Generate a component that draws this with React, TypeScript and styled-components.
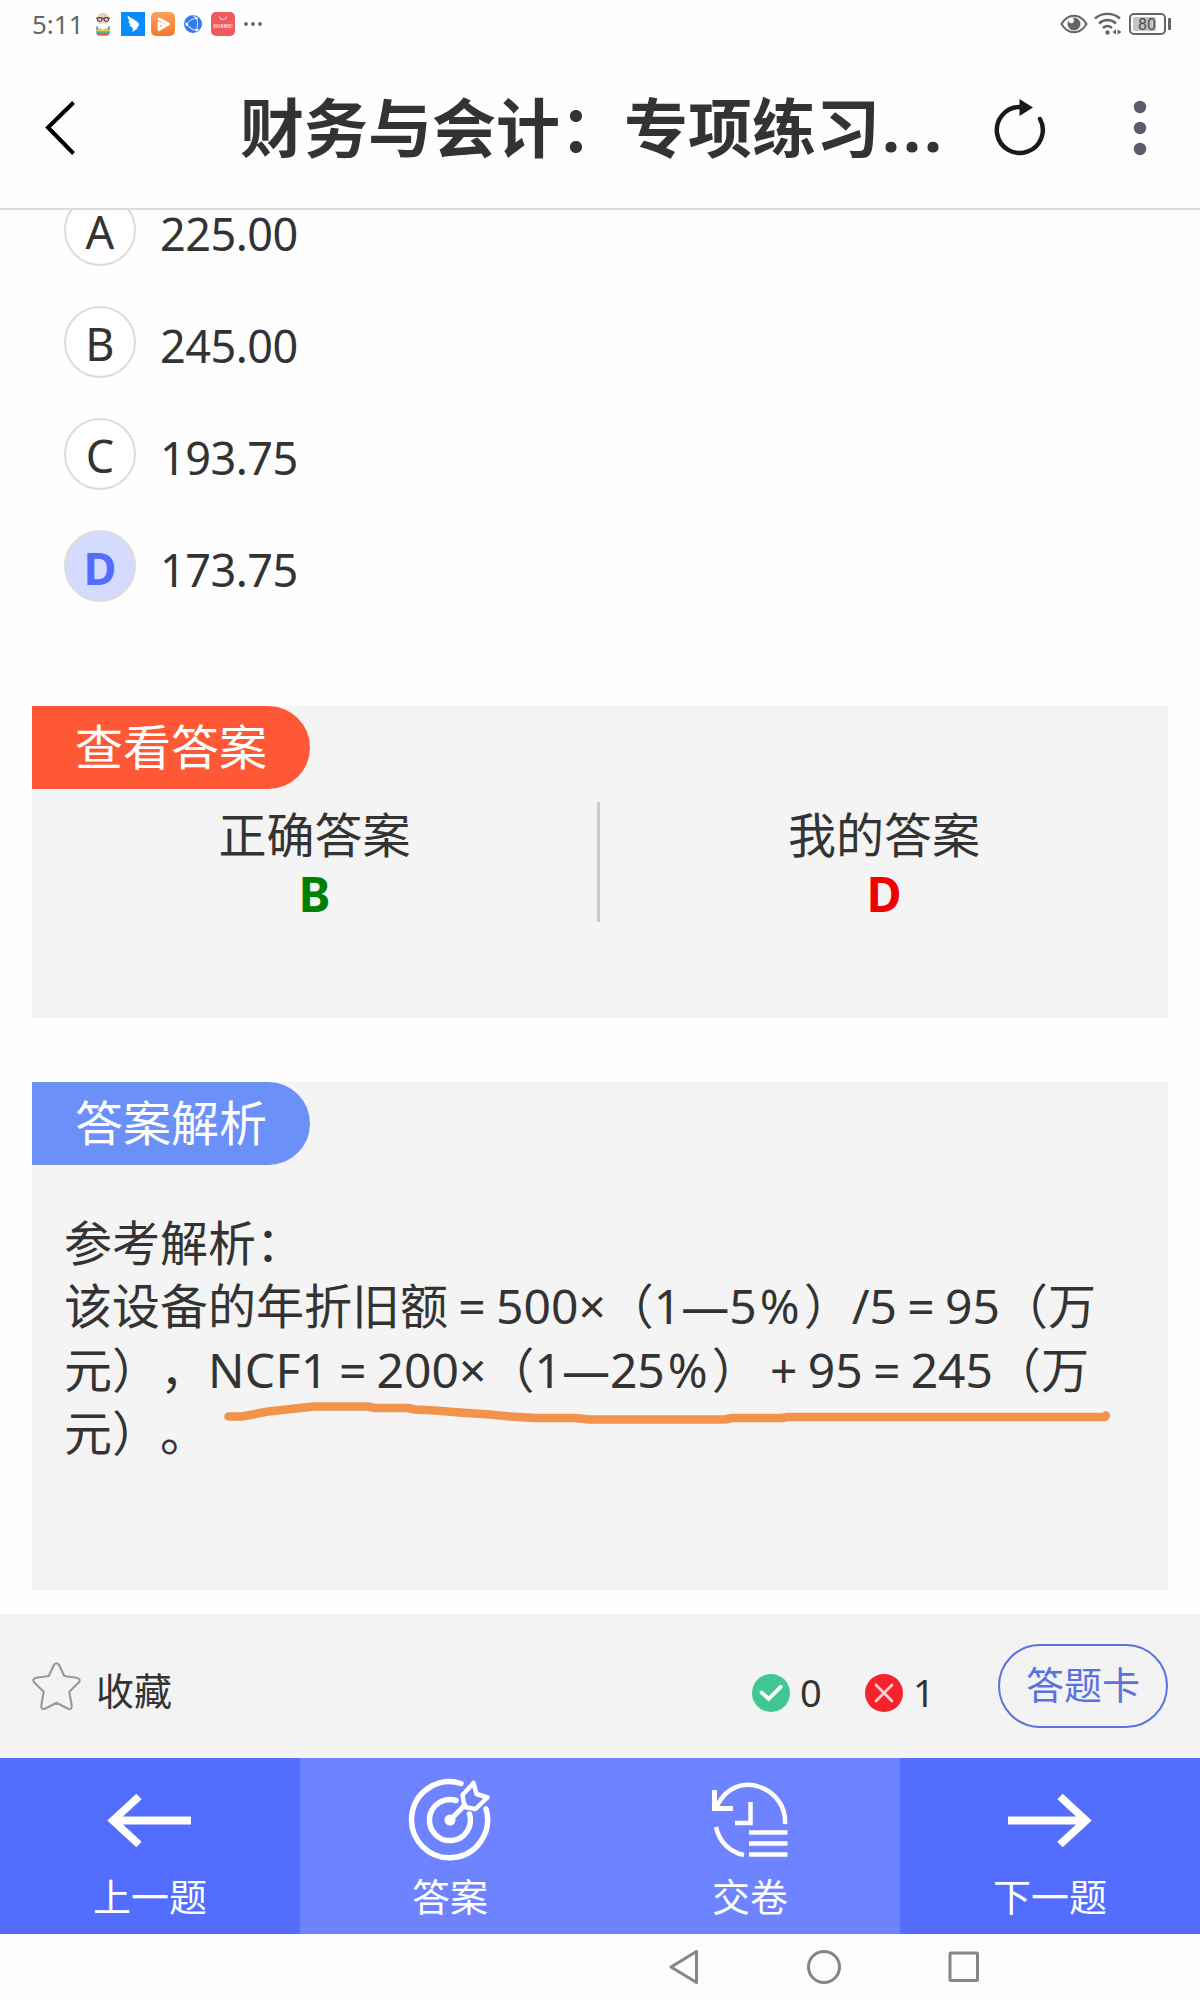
import React from "react";
import styled, { createGlobalStyle } from "styled-components";

const Global = createGlobalStyle`
  * { box-sizing: border-box; }
  html, body { margin: 0; padding: 0; background: #fefefe; }
  body {
    font-family: "Noto Sans", "Noto Sans CJK SC", sans-serif;
    color: #333;
    text-spacing-trim: space-all;
  }
  svg { display: block; flex: none; }
`;

const Screen = styled.div`
  width: 1200px;
  height: 2000px;
  display: flex;
  flex-direction: column;
  overflow: hidden;
  background: #fefefe;
`;

const StatusBar = styled.div`
  height: 48px;
  flex: none;
  display: flex;
  align-items: center;
  justify-content: space-between;
  padding: 0 29px 0 32px;
`;

const StatusGroup = styled.div<{ $gap: number }>`
  display: flex;
  align-items: center;
  gap: ${(p) => p.$gap}px;
`;

const AppIcons = styled.div`
  display: flex;
  align-items: center;
  gap: 9px;
`;

const Clock = styled.span`
  font-size: 26px;
  line-height: 26px;
  color: #666;
  width: 57px;
`;

const Battery = styled.div`
  display: flex;
  align-items: center;
  gap: 2px;
  margin-left: 1px;
`;

const BatteryBody = styled.div`
  width: 37px;
  height: 22px;
  border: 2px solid #666;
  border-radius: 5px;
  padding: 2px;
`;

const BatteryFill = styled.div`
  width: 23px;
  height: 14px;
  border-radius: 2px;
  background: #c4c4c4;
  color: #4c4c4c;
  font: 16px/15px Roboto, sans-serif;
  padding-left: 5px;
`;

const BatteryNub = styled.div`
  width: 3px;
  height: 12px;
  border-radius: 1px;
  background: #666;
`;

const Header = styled.header`
  height: 162px;
  flex: none;
  display: flex;
  align-items: center;
  border-bottom: 2px solid #dcdcdc;
  padding: 0 53px 0 45px;
`;

const Title = styled.h1`
  margin: 0 0 0 165px;
  width: 709px;
  font-size: 64px;
  line-height: 96px;
  font-weight: 700;
  white-space: nowrap;
`;

const Dots = styled.span`
  letter-spacing: 3px;
  margin-left: 2px;
`;

const Tools = styled.div`
  display: flex;
  align-items: center;
  gap: 87px;
  margin-left: auto;
`;

const Content = styled.main`
  height: 1404px;
  flex: none;
  overflow: hidden;
  padding: 0 32px;
`;

const Options = styled.div`
  margin-top: -16px;
  padding-left: 32px;
  display: flex;
  flex-direction: column;
  gap: 40px;
`;

const Option = styled.div`
  height: 72px;
  display: flex;
  align-items: center;
  gap: 24px;
  font-size: 45px;
`;

const Letter = styled.span<{ $on?: boolean }>`
  width: 72px;
  height: 72px;
  border: 2px solid #dcdcdc;
  border-radius: 50%;
  background: ${(p) => (p.$on ? "#d4dbff" : "#fff")};
  color: ${(p) => (p.$on ? "#536dfe" : "#333")};
  font-weight: ${(p) => (p.$on ? 700 : 400)};
  line-height: 71px;
  text-align: center;
`;

const OptionText = styled.span`
  line-height: 66px;
  padding-top: 7px;
  letter-spacing: -0.5px;
`;

const Panel = styled.section<{ $top: number; $height: number }>`
  position: relative;
  margin-top: ${(p) => p.$top}px;
  height: ${(p) => p.$height}px;
  background: #f4f4f4;
`;

const Tag = styled.div<{ $color: string }>`
  width: 278px;
  height: 83px;
  border-radius: 0 42px 42px 0;
  background: ${(p) => p.$color};
  color: #fff;
  font-size: 48px;
  line-height: 82px;
  padding-left: 43px;
`;

const Compare = styled.div`
  display: grid;
  grid-template-columns: 565px 571px;
  grid-template-rows: 120px;
  margin-top: 13px;
  height: 120px;
`;

const Answer = styled.div`
  display: flex;
  flex-direction: column;
  align-items: center;
  font-size: 48px;
  line-height: 60px;
  padding-top: 3px;
  & + & { border-left: 3px solid #ccc; }
`;

const Pick = styled.strong<{ $color: string }>`
  color: ${(p) => p.$color};
  line-height: 58px;
`;

const Explain = styled.div`
  padding: 46px 0 0 32px;
  font-size: 48px;
  line-height: 63.4px;
`;

const Line = styled.div`
  white-space: nowrap;
`;

const Op = styled.span`
  display: inline-block;
  width: 48px;
  text-align: center;
`;

const Percent = styled.span`
  margin: 0 4px 0 3px;
`;

const Formula = styled.span`
  letter-spacing: 0.35px;
`;

const Stroke = styled.svg`
  position: absolute;
  left: 188px;
  top: 314px;
`;

const ToolBar = styled.div`
  height: 144px;
  flex: none;
  display: flex;
  align-items: center;
  background: #f3f3f3;
  padding: 0 32px;
  font-size: 38px;
  line-height: 48px;
`;

const Favorite = styled.div`
  display: flex;
  align-items: center;
  gap: 15px;
  flex: 1;
`;

const Label = styled.span`
  padding-top: 7px;
`;

const Count = styled.div<{ $width: number }>`
  width: ${(p) => p.$width}px;
  display: flex;
  align-items: center;
  gap: 10px;
  padding-top: 14px;
`;

const CountValue = styled.span`
  line-height: 44px;
  padding-bottom: 2px;
`;

const CardButton = styled.button`
  width: 170px;
  height: 84px;
  padding: 0 0 4px;
  border: 2px solid #5a72de;
  border-radius: 42px;
  background: transparent;
  color: #5a72de;
  font: inherit;
`;

const Nav = styled.nav`
  height: 176px;
  flex: none;
  display: grid;
  grid-template-columns: repeat(4, 300px);
`;

const NavItem = styled.div<{ $light?: boolean }>`
  background: ${(p) => (p.$light ? "#6e83ff" : "#536dfe")};
  color: #fff;
  display: flex;
  flex-direction: column;
  align-items: center;
  padding-top: 16px;
  font-size: 38px;
  line-height: 50px;
  gap: 5px;
`;

const SystemBar = styled.div`
  height: 66px;
  flex: none;
  background: #fcfcfc;
  display: flex;
  align-items: center;
  gap: 104px;
  padding: 0 0 0 667px;
`;

const navIcon = { width: 92, height: 92, viewBox: "0 0 92 92", fill: "none", stroke: "#fff" };

function PersonIcon() {
  return (
    <svg width="16" height="24" viewBox="0 0 16 24">
      <ellipse cx="8" cy="7" rx="6" ry="6.2" fill="#efcdbb" />
      <rect x="1.2" y="13" width="13.6" height="10.5" rx="3" fill="#5a9fae" />
      <path d="M1.5 17.5h13v2h-13z" fill="#f3d14d" />
      <path d="M1.5 19.5h13l-1.5 2h-10z" fill="#54b583" />
      <path d="M2.5 21.2h11l-1 2.3h-9z" fill="#e45b55" />
      <path d="M2 13l6-2 6 2-2 4.500-1.500-1-2.500 1.500-2.500-1.500-1.500 1z" fill="#fff" />
      <g fill="none" stroke="#4b3b35" strokeWidth="1.1">
        <rect x="2.4" y="5.6" width="4.6" height="3.6" rx="1.6" />
        <rect x="9" y="5.6" width="4.6" height="3.6" rx="1.6" />
        <path d="M1 6.300h2M7 6.300h2M13 6.300h2" />
      </g>
    </svg>
  );
}

function WingIcon() {
  return (
    <svg width="24" height="24" viewBox="0 0 24 24">
      <rect width="24" height="24" fill="#0a8cff" />
      <path d="M6.5 3.5c3 2.300 8 4.500 10.500 7 1.200 1.300 1.200 2.500.2 4l-1.400 1.500 1 .3-5.800 4 1.500-3.500-1.700-.2.800-1.200c-2-.6-3-1.500-3.200-2.600l1.500.2c-1.500-1.300-2.200-2.500-2.300-4l1 .3c-1.200-2-1.900-3.600-2.100-5.800z" fill="#fff" />
    </svg>
  );
}

function PlayIcon() {
  return (
    <svg width="24" height="24" viewBox="0 0 24 24">
      <defs>
        <linearGradient id="play" x1="0" y1="0" x2="0" y2="1">
          <stop offset="0" stopColor="#f9a15f" />
          <stop offset="1" stopColor="#f5782b" />
        </linearGradient>
      </defs>
      <rect width="24" height="24" rx="5" fill="url(#play)" />
      <path d="M8 7l9.500 5-9.500 5.500M8 17.500V11l4 1.500" fill="none" stroke="#fff" strokeWidth="2.800" strokeLinejoin="round" strokeLinecap="round" />
    </svg>
  );
}

function GlobeIcon() {
  return (
    <svg width="18" height="18" viewBox="0 0 18 18">
      <circle cx="9" cy="9" r="9" fill="#3479ea" />
      <path d="M12.500 3C8 4 4 6.500 2.500 9.500 6 13 9.500 15 12.500 15.500 14 11 14 7 12.500 3zM12.500 3L9 .5M2.500 9.500L1 7M12.500 15.500l3-1" fill="none" stroke="#bcd9ff" strokeWidth="1.100" />
      <circle cx="12.500" cy="3.300" r="1.200" fill="#fff" />
      <circle cx="2.800" cy="9.500" r="1.200" fill="#fff" />
      <circle cx="12.500" cy="15" r="1.200" fill="#fff" />
    </svg>
  );
}

function StoreIcon() {
  return (
    <svg width="24" height="24" viewBox="0 0 24 24">
      <rect width="24" height="24" rx="5" fill="#ee5a5d" />
      <path d="M8.500 4.500c.5 4 6.500 4 7 0" fill="none" stroke="#fbc9c9" strokeWidth="1.100" />
      <text x="12" y="16" textAnchor="middle" fontFamily="Roboto" fontWeight="700" fontSize="4.600" fill="#fde0e0" textLength="19">HUAWEI</text>
    </svg>
  );
}

function MoreIcon() {
  return (
    <svg width="20" height="6" viewBox="0 0 20 6" fill="#666">
      <circle cx="2" cy="3" r="1.900" /><circle cx="9" cy="3" r="1.900" /><circle cx="16" cy="3" r="1.900" />
    </svg>
  );
}

function EyeIcon() {
  return (
    <svg width="28" height="20" viewBox="0 0 28 20">
      <path d="M1.500 10C8-1 20-1 26.500 10 20 21 8 21 1.500 10z" fill="none" stroke="#666" strokeWidth="2" />
      <path d="M14 3.500a6.500 6.500 0 1 1-6.500 6.500 6 6 0 0 1 1-3.500 2.800 2.800 0 1 0 3.700-2.800z" fill="#666" />
    </svg>
  );
}

function WifiIcon() {
  return (
    <svg width="28" height="24" viewBox="0 0 28 24" fill="none" stroke="#666" strokeWidth="2.400">
      <path d="M1 6.500C8 .3 19 .3 26 6.500" />
      <path d="M5 11.500c5-4.600 12-4.600 17 0" />
      <path d="M9 16c3-2.600 6-2.600 9 0" />
      <circle cx="13.500" cy="20.500" r="2.200" fill="#666" stroke="none" />
      <path d="M22 17.200v5.600L18.500 20zM23.600 17.200v5.600L27.500 20z" fill="#666" stroke="none" />
    </svg>
  );
}

function BackIcon() {
  return (
    <svg width="30" height="54" viewBox="0 0 30 54">
      <path d="M28.500 1.500L3 26.500l25.500 26" fill="none" stroke="#000" strokeWidth="4" />
    </svg>
  );
}

function RefreshIcon() {
  return (
    <svg width="52" height="58" viewBox="0 0 52 58">
      <path d="M25.500 8a23 23 0 1 0 20.500 12" fill="none" stroke="#1a1a1a" strokeWidth="4.500" strokeLinecap="round" />
      <path d="M25.500 0l13.500 8.500L25.500 17z" fill="#1a1a1a" />
    </svg>
  );
}

function KebabIcon() {
  return (
    <svg width="14" height="56" viewBox="0 0 14 56" fill="#5c5b6c">
      <circle cx="7" cy="7" r="6.200" /><circle cx="7" cy="28" r="6.200" /><circle cx="7" cy="49" r="6.200" />
    </svg>
  );
}

function StarIcon() {
  return (
    <svg width="49" height="48" viewBox="0 0 49 48">
      <path d="M21.800 3.200Q24.500-.8 27.200 3.200L32.200 14 44.500 15.800Q49.500 17.200 46.500 20.800L37.300 29.800 39.700 43.500Q40 48.500 35.600 46.500L24.500 40.700 13.400 46.500Q9 48.500 9.300 43.500L11.700 29.800 2.500 20.800Q-.5 17.200 4.500 15.800L16.800 14z" fill="none" stroke="#999" strokeWidth="2.100" strokeLinejoin="round" />
    </svg>
  );
}

function RightIcon() {
  return (
    <svg width="38" height="38" viewBox="0 0 38 38">
      <circle cx="19" cy="19" r="19" fill="#41c795" />
      <path d="M9.500 18.500l7.200 6.300 12-12" fill="none" stroke="#fff" strokeWidth="3.800" strokeLinecap="round" />
    </svg>
  );
}

function WrongIcon() {
  return (
    <svg width="38" height="38" viewBox="0 0 38 38">
      <circle cx="19" cy="19" r="19" fill="#f5222d" />
      <path d="M11 11l16 16M27 11L11 27" stroke="#ffd0d3" strokeWidth="2.800" strokeLinecap="round" />
    </svg>
  );
}

function ArrowIcon({ flip }: { flip?: boolean }) {
  return (
    <svg {...navIcon}>
      <path
        d="M87 46.500H9M35 22.500L9 46.500l26 24"
        strokeWidth="7.800"
        transform={flip ? "matrix(-1 0 0 1 91 0)" : undefined}
      />
    </svg>
  );
}

function TargetIcon() {
  return (
    <svg {...navIcon} strokeWidth="5.500" strokeLinecap="round">
      <path d="M57 9.500A38 38 0 1 0 82 35" />
      <path d="M52 26.500A20.500 20.500 0 1 0 65.500 40" />
      <circle cx="46" cy="46" r="5.500" fill="#fff" stroke="none" />
      <path d="M46 46L61 31" strokeWidth="5" />
      <path d="M58.500 21L69.500 9l3 11 11 3.500-12 11.500-11-2z" strokeWidth="4.500" strokeLinejoin="round" />
    </svg>
  );
}

function SubmitIcon() {
  return (
    <svg {...navIcon} strokeWidth="4.500">
      <path d="M13 32C22 13 40 7 56 13 72 19 82 33 81 50" />
      <path d="M10.500 16v18.500H29" strokeWidth="5" />
      <path d="M46.500 28v21H31" />
      <path d="M12 53c3 14 13 25 28 28" />
      <path d="M45 58.500h38.500M45 69.500h38.500M45 80.500h38.500" />
    </svg>
  );
}

export default function App() {
  return (
    <Screen>
      <Global />
      <StatusBar>
        <StatusGroup $gap={6}>
          <Clock>5:11</Clock>
          <StatusGroup $gap={9}>
            <StatusGroup $gap={10}>
              <PersonIcon />
              <StatusGroup $gap={6}>
                <WingIcon />
                <PlayIcon />
              </StatusGroup>
            </StatusGroup>
            <AppIcons>
              <GlobeIcon />
              <StoreIcon />
              <MoreIcon />
            </AppIcons>
          </StatusGroup>
        </StatusGroup>
        <StatusGroup $gap={6}>
          <EyeIcon />
          <WifiIcon />
          <Battery>
            <BatteryBody>
              <BatteryFill>80</BatteryFill>
            </BatteryBody>
            <BatteryNub />
          </Battery>
        </StatusGroup>
      </StatusBar>

      <Header>
        <BackIcon />
        <Title>
          财务与会计：专项练习<Dots>...</Dots>
        </Title>
        <Tools>
          <RefreshIcon />
          <KebabIcon />
        </Tools>
      </Header>

      <Content>
        <Options>
          <Option><Letter>A</Letter><OptionText>225.00</OptionText></Option>
          <Option><Letter>B</Letter><OptionText>245.00</OptionText></Option>
          <Option><Letter>C</Letter><OptionText>193.75</OptionText></Option>
          <Option><Letter $on>D</Letter><OptionText>173.75</OptionText></Option>
        </Options>

        <Panel $top={104} $height={312}>
          <Tag $color="#ff5837">查看答案</Tag>
          <Compare>
            <Answer>正确答案<Pick $color="#008000">B</Pick></Answer>
            <Answer>我的答案<Pick $color="#f00000">D</Pick></Answer>
          </Compare>
        </Panel>

        <Panel $top={64} $height={508}>
          <Tag $color="#6b90f8">答案解析</Tag>
          <Explain>
            <Line>参考解析：</Line>
            <Line>该设备的年折旧额<Op>=</Op>500×（1—5<Percent>%</Percent>）/5<Op>=</Op>95（万</Line>
            <Line>元），<Formula>NCF1</Formula><Op>=</Op>200×（1—25<Percent>%</Percent>）<Op>+</Op>95<Op>=</Op>245（万</Line>
            <Line>元）。</Line>
          </Explain>
          <Stroke width="900" height="40" viewBox="220 1396 900 40" fill="none" stroke="#f2924b" strokeWidth="8.500" strokeLinecap="round" strokeLinejoin="round">
            <path d="M228.500 1416.500H242L268 1411.500 300 1408 314 1406.500H368L375 1408H408L415 1409.500 435 1410.500 460 1412.500 490 1414.500 510 1416.500 535 1418H575L590 1419.500H725L732 1418H782L788 1417H1105L1106 1415.500" />
          </Stroke>
        </Panel>
      </Content>

      <ToolBar>
        <Favorite>
          <StarIcon />
          <Label>收藏</Label>
        </Favorite>
        <Count $width={113}><RightIcon /><CountValue>0</CountValue></Count>
        <Count $width={133}><WrongIcon /><CountValue>1</CountValue></Count>
        <CardButton>答题卡</CardButton>
      </ToolBar>

      <Nav>
        <NavItem><ArrowIcon />上一题</NavItem>
        <NavItem $light><TargetIcon />答案</NavItem>
        <NavItem $light><SubmitIcon />交卷</NavItem>
        <NavItem><ArrowIcon flip />下一题</NavItem>
      </Nav>

      <SystemBar>
        <svg width="36" height="36" viewBox="0 0 36 36" fill="none" stroke="#858585" strokeWidth="3" strokeLinejoin="round">
          <path d="M4 18L29.500 2.500v31z" />
        </svg>
        <svg width="36" height="36" viewBox="0 0 36 36" fill="none" stroke="#858585" strokeWidth="3">
          <circle cx="17" cy="18" r="15.500" />
        </svg>
        <svg width="36" height="36" viewBox="0 0 36 36" fill="none" stroke="#858585" strokeWidth="3" strokeLinejoin="round">
          <rect x="3" y="4" width="27.500" height="27.500" rx="1" />
        </svg>
      </SystemBar>
    </Screen>
  );
}
